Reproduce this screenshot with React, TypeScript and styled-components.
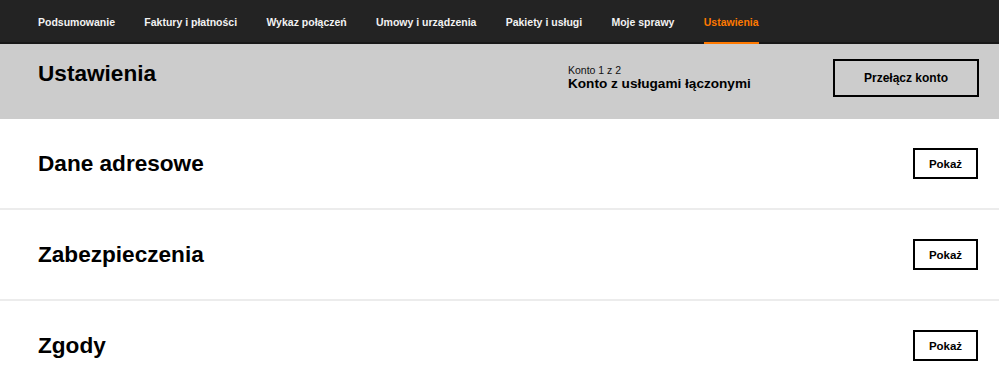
import React from "react";
import styled, { createGlobalStyle } from "styled-components";

const GlobalStyle = createGlobalStyle`
  html, body {
    margin: 0;
    padding: 0;
    background: #ffffff;
    font-family: "Liberation Sans", Arial, Helvetica, sans-serif;
    color: #000;
    -webkit-font-smoothing: antialiased;
  }
  * { box-sizing: border-box; }
`;

const Page = styled.div`
  width: 999px;
  overflow: hidden;
`;

const NavBar = styled.nav`
  display: flex;
  align-items: stretch;
  gap: 29.3px;
  height: 44px;
  padding: 0 0 0 38px;
  background: #232323;
  box-shadow: inset 0 -2px 0 #171717;
`;

const NavItem = styled.a<{ $active?: boolean }>`
  display: flex;
  align-items: center;
  padding-top: 2px;
  border-bottom: 2px solid ${(p) => (p.$active ? "#ff7900" : "transparent")};
  color: ${(p) => (p.$active ? "#ff7900" : "#f2f2f2")};
  font-size: 10.5px;
  font-weight: 700;
  text-decoration: none;
  white-space: nowrap;
`;

const Header = styled.header`
  display: flex;
  align-items: flex-start;
  justify-content: space-between;
  height: 75px;
  padding: 15px 20px 0 38px;
  background: #cccccc;
`;

const PageTitle = styled.h1`
  margin: 2px 0 0;
  font-size: 22.6px;
  line-height: 26px;
  font-weight: 700;
`;

const AccountArea = styled.div`
  display: flex;
  align-items: flex-start;
`;

const AccountInfo = styled.div`
  display: flex;
  flex-direction: column;
  width: 265px;
  padding-top: 5px;
`;

const AccountCounter = styled.span`
  font-size: 10.5px;
  line-height: 12px;
  color: #111;
`;

const AccountName = styled.span`
  font-size: 13.6px;
  line-height: 16px;
  font-weight: 700;
`;

const OutlineButton = styled.button<{ $size?: "large" | "small" }>`
  display: flex;
  align-items: center;
  justify-content: center;
  width: ${(p) => (p.$size === "large" ? "146px" : "65px")};
  height: ${(p) => (p.$size === "large" ? "38px" : "31px")};
  padding: 0;
  background: transparent;
  border: 2px solid #000;
  color: #000;
  font-family: inherit;
  font-size: ${(p) => (p.$size === "large" ? "12px" : "11.5px")};
  font-weight: 700;
  cursor: pointer;
`;

const Section = styled.section`
  display: flex;
  align-items: center;
  justify-content: space-between;
  height: 91px;
  padding: 0 21px 0 38px;
  border-bottom: 2px solid #ececec;
  background: #fff;
`;

const SectionTitle = styled.h2`
  margin: 0;
  font-size: 22.6px;
  line-height: 26px;
  font-weight: 700;
`;

const navItems = [
  "Podsumowanie",
  "Faktury i płatności",
  "Wykaz połączeń",
  "Umowy i urządzenia",
  "Pakiety i usługi",
  "Moje sprawy",
  "Ustawienia",
];

const sections = ["Dane adresowe", "Zabezpieczenia", "Zgody"];

export default function App() {
  return (
    <Page>
      <GlobalStyle />
      <NavBar>
        {navItems.map((item) => (
          <NavItem key={item} $active={item === "Ustawienia"}>
            {item}
          </NavItem>
        ))}
      </NavBar>
      <Header>
        <PageTitle>Ustawienia</PageTitle>
        <AccountArea>
          <AccountInfo>
            <AccountCounter>Konto 1 z 2</AccountCounter>
            <AccountName>Konto z usługami łączonymi</AccountName>
          </AccountInfo>
          <OutlineButton $size="large">Przełącz konto</OutlineButton>
        </AccountArea>
      </Header>
      {sections.map((s) => (
        <Section key={s}>
          <SectionTitle>{s}</SectionTitle>
          <OutlineButton $size="small">Pokaż</OutlineButton>
        </Section>
      ))}
    </Page>
  );
}
